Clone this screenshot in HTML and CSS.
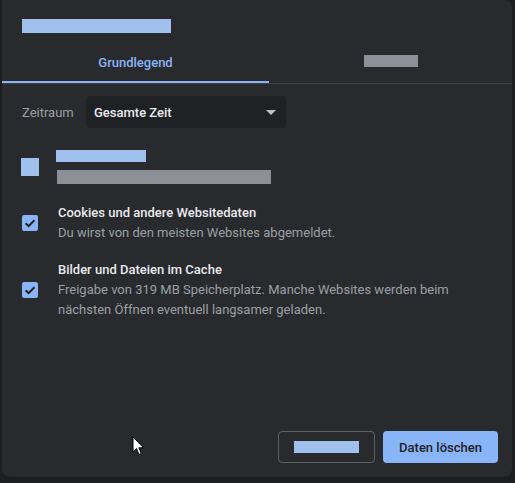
FILE: index.html
```html
<!DOCTYPE html>
<html lang="de">
<head>
<meta charset="utf-8">
<link rel="stylesheet" href="styles.css">
</head>
<body>
<div class="dialog">
  <div class="title"><div class="title-bar"></div></div>
  <div class="tabs">
    <div class="tab tab-active">Grundlegend</div>
    <div class="tab tab-second"><div class="tab-bar"></div></div>
  </div>
  <div class="content">
    <div class="range-row">
      <span class="range-label">Zeitraum</span>
      <div class="select">
        <span class="select-text">Gesamte Zeit</span>
        <span class="select-arrow"></span>
      </div>
    </div>
    <div class="option option-first">
      <div class="checkbox checkbox-plain"></div>
      <div class="option-text">
        <div class="ph-title"></div>
        <div class="ph-desc"></div>
      </div>
    </div>
    <div class="option option-second">
      <div class="checkbox checkbox-checked">
        <svg viewBox="0 0 16 16" width="16" height="16"><path d="M3.6 8.2 L6.6 11.1 L12.4 5.2" fill="none" stroke="#202124" stroke-width="2"/></svg>
      </div>
      <div class="option-text">
        <div class="opt-title">Cookies und andere Websitedaten</div>
        <div class="opt-desc">Du wirst von den meisten Websites abgemeldet.</div>
      </div>
    </div>
    <div class="option option-third">
      <div class="checkbox checkbox-checked">
        <svg viewBox="0 0 16 16" width="16" height="16"><path d="M3.6 8.2 L6.6 11.1 L12.4 5.2" fill="none" stroke="#202124" stroke-width="2"/></svg>
      </div>
      <div class="option-text">
        <div class="opt-title">Bilder und Dateien im Cache</div>
        <div class="opt-desc">Freigabe von 319 MB Speicherplatz. Manche Websites werden beim nächsten Öffnen eventuell langsamer geladen.</div>
      </div>
    </div>
  </div>
  <div class="footer">
    <div class="btn btn-cancel"><div class="btn-bar"></div></div>
    <div class="btn btn-primary">Daten löschen</div>
  </div>
  <svg class="cursor" viewBox="0 0 13 20" width="13" height="20"><path d="M1 1 L1 16 L4.5 12.6 L7 18.5 L9.3 17.5 L6.9 11.8 L11.6 11.8 Z" fill="#fff" stroke="#000" stroke-width="1"/></svg>
</div>
</body>
</html>
```
FILE: styles.css
```css
html, body {
  margin: 0;
  padding: 0;
}
body {
  background: #1d1e21;
  width: 515px;
  height: 483px;
  overflow: hidden;
  font-family: Roboto, "Liberation Sans", sans-serif;
  font-size: 13px;
  color: #e8eaed;
}
.dialog {
  position: relative;
  margin-left: 2px;
  width: 510px;
  height: 477px;
  background: #292a2d;
  border-radius: 0 8px 8px 8px;
  display: flex;
  flex-direction: column;
}
.title {
  padding: 19px 20px 0;
}
.title-bar {
  width: 149px;
  height: 14px;
  background: #a0c0ee;
}
.tabs {
  margin-top: 9px;
  display: flex;
  border-bottom: 1px solid #3c4043;
}
.tab {
  height: 41px;
  display: flex;
  align-items: center;
  justify-content: center;
  box-sizing: border-box;
}
.tab-active {
  width: 267px;
  color: #8ab4f8;
  font-weight: 500;
  padding-bottom: 0;
  box-shadow: inset 0 -2px 0 #8ab4f8;
}
.tab-second {
  flex: 1;
  padding-bottom: 3px;
}
.tab-bar {
  width: 54px;
  height: 12px;
  background: #8b9197;
}
.content {
  padding: 0 14px 0 20px;
}
.range-row {
  margin-top: 12px;
  display: flex;
  align-items: center;
}
.range-label {
  color: #9aa0a6;
  width: 64px;
}
.select {
  width: 200px;
  height: 32px;
  box-sizing: border-box;
  background: #202124;
  border-radius: 4px;
  display: flex;
  align-items: center;
  justify-content: space-between;
  padding: 0 10px 0 8px;
  font-weight: 500;
  color: #e8eaed;
}
.select-arrow {
  width: 0;
  height: 0;
  border-left: 5px solid transparent;
  border-right: 5px solid transparent;
  border-top: 5px solid #bdc1c6;
}
.option {
  display: flex;
  align-items: center;
}
.option-first {
  margin-top: 19px;
  height: 40px;
}
.option-second {
  margin-top: 16px;
}
.option-third {
  margin-top: 17px;
}
.checkbox {
  flex: none;
  width: 16px;
  height: 16px;
  margin-right: 20px;
  border-radius: 2px;
  background: #8ab4f8;
}
.checkbox svg {
  display: block;
}
.checkbox-plain {
  width: 18px;
  height: 18px;
  margin-left: -1px;
  margin-right: 17px;
  border-radius: 0;
  background: #a0c0ee;
}
.option-text {
  line-height: 20px;
}
.ph-title {
  width: 90px;
  height: 12px;
  background: #a0c0ee;
}
.ph-desc {
  margin-top: 8px;
  margin-left: 1px;
  width: 214px;
  height: 14px;
  background: #8b9197;
}
.opt-title {
  font-weight: 500;
  color: #e8eaed;
}
.opt-desc {
  color: #9aa0a6;
  width: 400px;
}
.footer {
  margin-top: auto;
  padding: 0 14px 14px;
  display: flex;
  justify-content: flex-end;
  gap: 8px;
}
.btn {
  height: 32px;
  box-sizing: border-box;
  border-radius: 4px;
  display: flex;
  align-items: center;
  justify-content: center;
}
.btn-cancel {
  width: 97px;
  border: 1px solid #5f6368;
}
.btn-bar {
  width: 65px;
  height: 12px;
  background: #a0c0ee;
}
.btn-primary {
  width: 115px;
  background: #8ab4f8;
  color: #202124;
  font-weight: 500;
}
.cursor {
  position: absolute;
  left: 130px;
  top: 436px;
}
```
